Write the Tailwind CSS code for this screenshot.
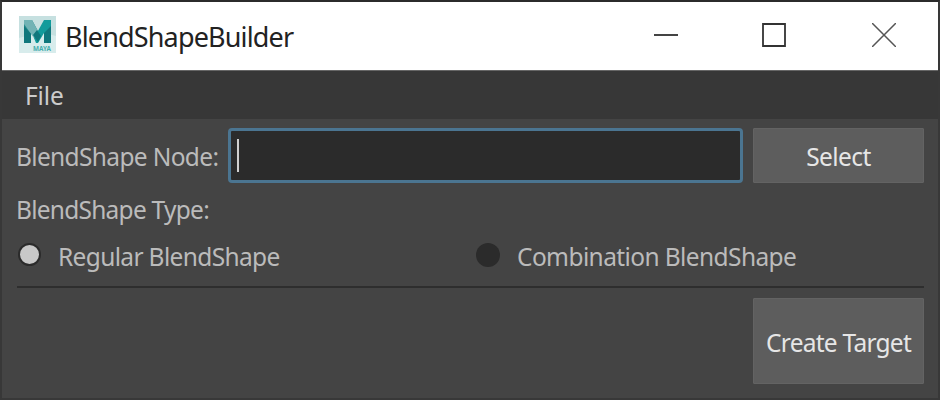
<!DOCTYPE html>
<html lang="en">
<head>
<meta charset="utf-8">
<title>BlendShapeBuilder</title>
<script src="https://cdn.jsdelivr.net/npm/@tailwindcss/browser@4"></script>
</head>
<body class="h-[400px] w-[940px] overflow-hidden bg-[#2b2b2b]">
<div class="flex h-[400px] w-[940px] flex-col border-2 border-t-[#2b2b2b] border-x-[#383838] border-b-[#383838] bg-[#444444] font-['Noto_Sans','Open_Sans',sans-serif] text-[24.5px] leading-[32px] tracking-[-0.65px] text-[#bbbbbb]">
  <header class="flex h-[69px] shrink-0 items-center border-b border-[#666] bg-white pl-[17px] pr-[42px]">
    <svg class="mb-[3px] h-[37px] w-[37px] shrink-0" viewBox="0 0 37 37">
      <rect width="37" height="37" fill="#d8ecec"/>
      <path d="M0 0H37V20L22 16L0 22Z" fill="#c6e0e0"/>
      <path d="M5 4H13L19 15V27L12 17V27H5Z" fill="#268c8e"/>
      <path d="M5 4H13L21 19L17 25L5 8Z" fill="#72b3b5"/>
      <path d="M25 4H32V27H25V17L19 27H17L15 22Z" fill="#119b9b"/>
      <path d="M5 10L12 18V27H5ZM25 17L32 10V27H25ZM14 19L18 14L22 20L19 26Z" fill="#10777c"/>
      <text x="14" y="34.500" font-family="Noto Sans, sans-serif" font-size="6.500" font-weight="bold" letter-spacing="0" textLength="18" lengthAdjust="spacingAndGlyphs" fill="#45adad">MAYA</text>
    </svg>
    <h1 class="ml-[9px] whitespace-nowrap pt-[2px] text-[27px] tracking-[-0.85px] text-[#222]">BlendShapeBuilder</h1>
    <div class="mb-[2px] ml-auto flex items-center">
      <svg class="mr-[84px] h-6 w-6" viewBox="0 0 24 24"><path d="M0 12H24" stroke="#444" stroke-width="2"/></svg>
      <svg class="mr-[86px] h-6 w-6" viewBox="0 0 24 24"><path d="M1 1H23V23H1Z" fill="none" stroke="#333" stroke-width="1.8"/></svg>
      <svg class="h-6 w-6" viewBox="0 0 24 24"><path d="M0 0L24 24M24 0L0 24" stroke="#555" stroke-width="1.5"/></svg>
    </div>
  </header>
  <nav class="flex h-12 shrink-0 items-center bg-[#373737] pl-[23px] pt-[2px] tracking-[-0.1px] text-[#cccccc]">File</nav>
  <main class="flex flex-1 flex-col pl-[15px] pr-[14px] pt-[9px]">
    <div class="flex h-[55px] shrink-0 items-center">
      <label for="node" class="-ml-px w-[212px] whitespace-nowrap pt-[3px]">BlendShape Node:</label>
      <div class="flex h-[55px] w-[515px] items-start rounded-[4px] border-[3px] border-[#4b7591] bg-[#2b2b2b] pl-[6px] pt-2">
        <span class="h-[33px] w-[2px] bg-[#d0d0d0]"></span>
      </div>
      <button class="ml-[10px] h-[55px] w-[171px] rounded-[1px] border border-[#636363] bg-[#5d5d5d] pt-[3px] tracking-[-0.55px] text-[#e6e6e6]">Select</button>
    </div>
    <p class="-ml-px mt-[11px] h-8 shrink-0 tracking-[-0.75px]">BlendShape Type:</p>
    <div class="mt-[13px] flex h-9 shrink-0 items-center">
      <div class="flex w-[459px] items-center">
        <span class="mb-[5px] ml-[1px] h-[23px] w-[23px] rounded-full border-2 border-[#2b2b2b] bg-[#c8c8c8]"></span>
        <span class="ml-[17px] whitespace-nowrap">Regular BlendShape</span>
      </div>
      <div class="flex items-center">
        <span class="mb-[5px] h-6 w-6 rounded-full bg-[#2b2b2b]"></span>
        <span class="ml-[17px] whitespace-nowrap tracking-[-0.6px]">Combination BlendShape</span>
      </div>
    </div>
    <div class="mt-[11px] h-[2px] w-[907px] shrink-0 bg-[#2e2e2e]"></div>
    <button class="ml-auto mt-[10px] h-[86px] w-[171px] shrink-0 whitespace-nowrap rounded-[1px] border border-[#636363] bg-[#5d5d5d] pt-[3px] tracking-[-0.75px] text-[#e6e6e6]">Create Target</button>
  </main>
</div>
</body>
</html>
